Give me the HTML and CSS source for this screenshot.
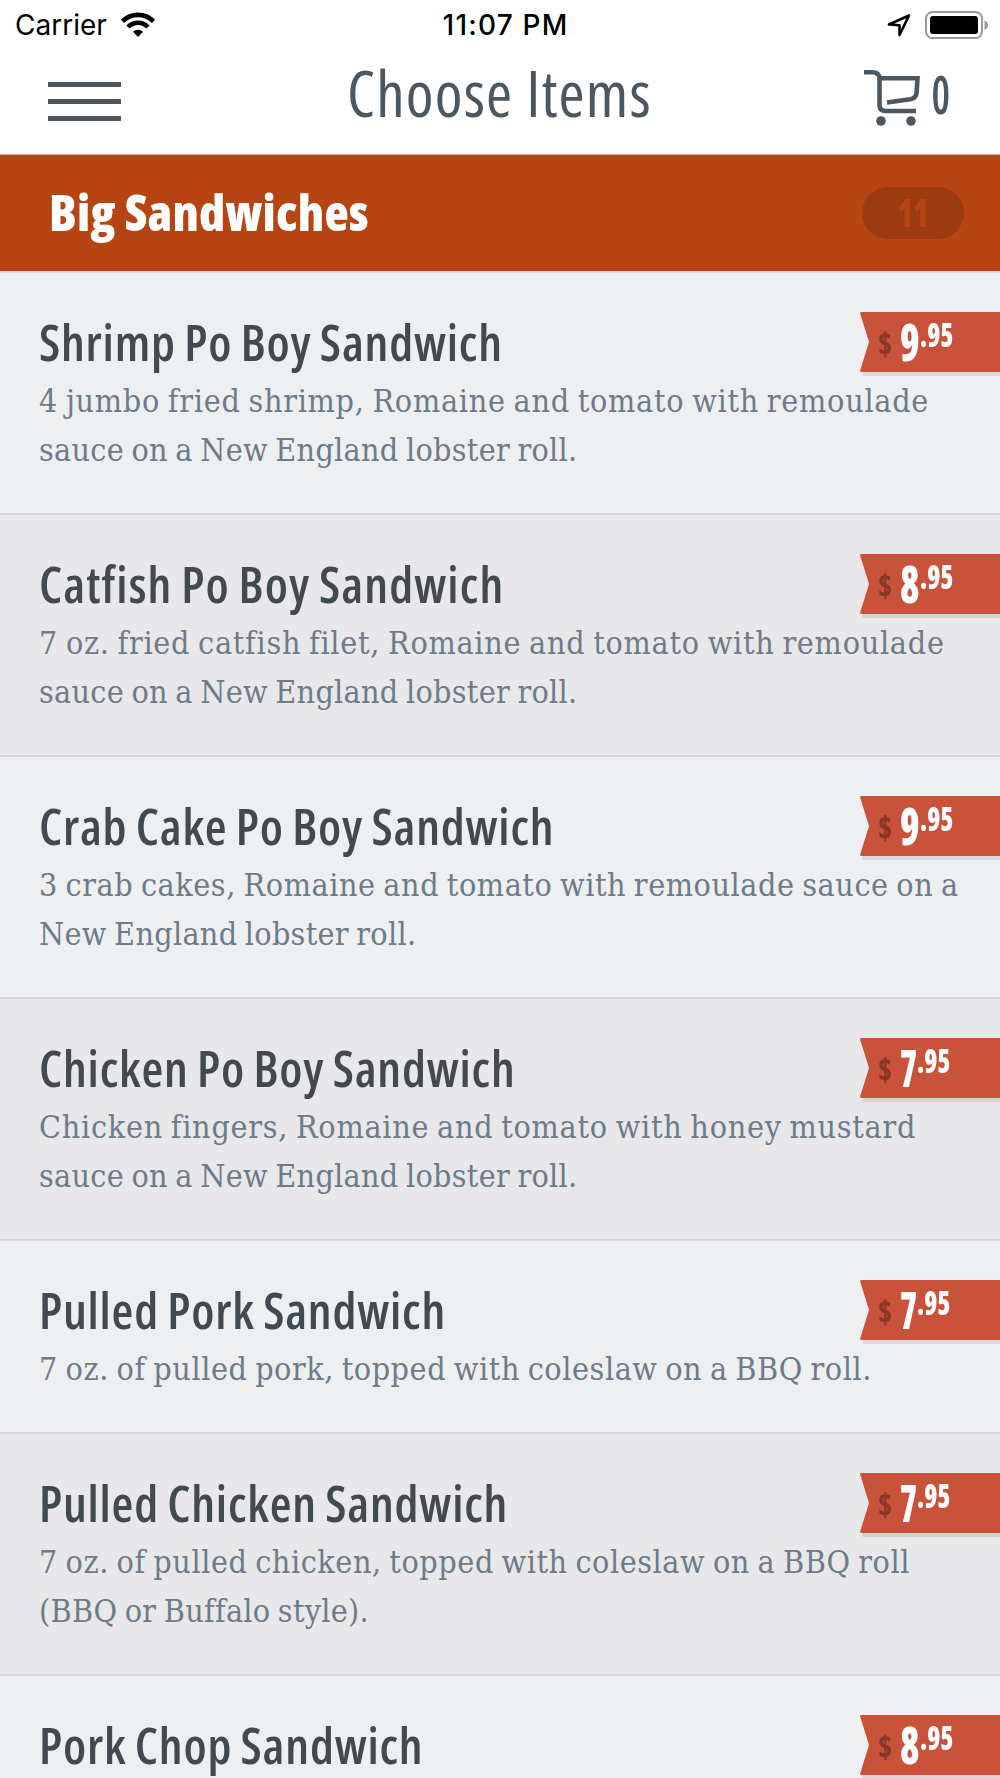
FILE: index.html
```
<!DOCTYPE html>
<html lang="en">
<head>
    <meta charset="UTF-8">
    <meta name="viewport" content="width=device-width, initial-scale=1.0">
    <title>Choose Items</title>
    <link rel="stylesheet" href="styles.css">
</head>
<body>
    <div class="statusbar">
        <span class="carrier">Carrier</span>
        <svg class="wifi" width="34" height="26" viewBox="0 0 34 26">
            <g fill="none" stroke="#000" stroke-width="4.6">
                <path d="M1.5 9.3a22 22 0 0 1 31 0"/>
                <path d="M7 15a14 14 0 0 1 20 0"/>
            </g>
            <path d="M17 25l-5-5.2a7.4 7.4 0 0 1 10 0z"/>
        </svg>
        <span class="time">11:07 PM</span>
        <svg class="location" width="24" height="24" viewBox="0 0 24 24">
            <path d="M2 11.5L22 2.5 12.5 22v-9.8z" fill="none" stroke="#000" stroke-width="2.6" stroke-linejoin="round"/>
        </svg>
        <svg class="battery" width="64" height="28" viewBox="0 0 64 28">
            <rect x="1" y="1" width="56" height="26" rx="6.5" fill="#fff" stroke="#999" stroke-width="2"/>
            <rect x="5" y="5" width="48" height="18" rx="3"/>
            <path d="M59.5 9.5q3.5 1.5 3.5 4.7t-3.5 4.7z" fill="#999"/>
        </svg>
    </div>
    <header class="header">
        <div class="menu"><i></i><i></i><i></i></div>
        <h1>Choose Items</h1>
        <div class="cart">
            <svg width="58" height="58" viewBox="0 0 58 58">
                <g fill="none" stroke="#4d5760" stroke-width="4.6">
                    <path d="M0 4.2h8q7.5 0 7.5 6.5V37q0 6 6 6H52"/>
                    <path d="M15.5 10.3H53.5l-.9 14q-.4 6-6.5 7L23 34.5"/>
                </g>
                <circle cx="17" cy="53" r="4.8" fill="#4d5760"/>
                <circle cx="47" cy="53" r="4.8" fill="#4d5760"/>
            </svg>
            <span class="cart-count">0</span>
        </div>
    </header>
    <div class="category">
        <h2>Big Sandwiches</h2>
        <div class="badge"><span>11</span></div>
    </div>
    <ul class="items">
        <li>
            <h3>Shrimp Po Boy Sandwich</h3>
            <p class="wide">4 jumbo fried shrimp, Romaine and tomato with remoulade<br>sauce on a New England lobster roll.</p>
            <div class="price"><i>$</i><b>9</b><sup>.95</sup></div>
        </li>
        <li>
            <h3 class="wide">Catfish Po Boy Sandwich</h3>
            <p class="wide">7 oz. fried catfish filet, Romaine and tomato with remoulade<br>sauce on a New England lobster roll.</p>
            <div class="price"><i>$</i><b>8</b><sup>.95</sup></div>
        </li>
        <li>
            <h3>Crab Cake Po Boy Sandwich</h3>
            <p>3 crab cakes, Romaine and tomato with remoulade sauce on a<br>New England lobster roll.</p>
            <div class="price"><i>$</i><b>9</b><sup>.95</sup></div>
        </li>
        <li>
            <h3>Chicken Po Boy Sandwich</h3>
            <p class="wide">Chicken fingers, Romaine and tomato with honey mustard<br>sauce on a New England lobster roll.</p>
            <div class="price seven"><i>$</i><b>7</b><sup>.95</sup></div>
        </li>
        <li>
            <h3>Pulled Pork Sandwich</h3>
            <p>7 oz. of pulled pork, topped with coleslaw on a BBQ roll.</p>
            <div class="price seven"><i>$</i><b>7</b><sup>.95</sup></div>
        </li>
        <li>
            <h3>Pulled Chicken Sandwich</h3>
            <p>7 oz. of pulled chicken, topped with coleslaw on a BBQ roll<br>(BBQ or Buffalo style).</p>
            <div class="price seven"><i>$</i><b>7</b><sup>.95</sup></div>
        </li>
        <li>
            <h3>Pork Chop Sandwich</h3>
            <div class="price"><i>$</i><b>8</b><sup>.95</sup></div>
        </li>
    </ul>
</body>
</html>
```
FILE: styles.css
```
* {
    box-sizing: border-box;
}
body {
    margin: 0;
    height: 1778px;
    overflow: hidden;
    background: #fff;
    font-family: "Open Sans", sans-serif;
    font-stretch: 75%;
    white-space: nowrap;
}
h1, h2, h3, p, ul {
    margin: 0;
    padding: 0;
}
.statusbar {
    display: flex;
    align-items: center;
    position: relative;
    height: 50px;
    padding: 0 11px 0 15px;
    font-family: Inter, sans-serif;
    font-size: 28px;
    font-stretch: 100%;
    color: #000;
}
.wifi {
    margin-left: 14px;
}
.time {
    position: absolute;
    left: 0;
    right: 0;
    padding-left: 11px;
    text-align: center;
    font-weight: 550;
    letter-spacing: 1.2px;
}
.location {
    margin-left: auto;
}
.battery {
    margin-left: 14px;
}
.header {
    display: grid;
    grid-template-columns: 1fr auto 1fr;
    align-items: start;
    height: 105px;
    padding: 0 49px 0 48px;
    border-bottom: 1px solid #c9b9ae;
    color: #4d5760;
}
.menu {
    width: 73px;
    padding-top: 32px;
}
.menu i {
    display: block;
    height: 5px;
    margin-bottom: 12px;
    background: #4d5760;
}
h1 {
    font-size: 63px;
    font-weight: 400;
    line-height: 86px;
    letter-spacing: 1.2px;
}
.cart {
    display: flex;
    justify-self: end;
    padding-top: 18px;
}
.cart-count {
    width: 29px;
    padding-left: 12px;
    font-size: 52px;
    font-weight: 650;
    line-height: 52px;
    transform: scaleX(.8);
    transform-origin: left;
}
.category {
    display: flex;
    align-items: center;
    justify-content: space-between;
    height: 116px;
    padding: 0 36px 0 49px;
    background: #b74514;
    color: #fff;
}
h2 {
    padding-bottom: 3px;
    font-size: 50px;
    font-weight: 800;
    letter-spacing: 0.2px;
}
.badge {
    width: 102px;
    height: 52px;
    margin-bottom: 1px;
    border-radius: 26px;
    background: #9c3a12;
    color: #b74514;
    font-size: 39px;
    font-weight: 800;
    line-height: 50px;
    text-align: center;
}
.badge span {
    display: block;
    transform: scaleX(.8);
}
.items {
    border-top: 2px solid #d8d9db;
    list-style: none;
}
.items li {
    position: relative;
    padding: 35px 0 38px 39px;
    border-bottom: 2px solid #d6d6d9;
    background: #eeeff1;
}
.items li:nth-child(even) {
    background: #e8e8ea;
}
h3 {
    height: 69px;
    color: #424a50;
    font-size: 50px;
    font-weight: 620;
    line-height: 69px;
    letter-spacing: 0.8px;
    word-spacing: -1.5px;
}
h3.wide {
    letter-spacing: 1.1px;
}
p {
    color: #6e7b88;
    font-family: "DejaVu Serif Condensed", "DejaVu Serif", serif;
    font-size: 32px;
    font-stretch: 75%;
    letter-spacing: 0.28px;
    line-height: 49px;
    word-spacing: -2px;
}
p::first-line {
    letter-spacing: 0.55px;
}
p.wide::first-line {
    letter-spacing: 0.72px;
}
.price {
    position: absolute;
    top: 39px;
    right: 0;
    display: flex;
    isolation: isolate;
    width: 140px;
    height: 60px;
    padding-left: 18px;
    color: #fff;
    filter: drop-shadow(2px 4px 0 rgba(0, 0, 0, .09));
}
.price::before {
    content: "";
    position: absolute;
    inset: 0;
    z-index: -1;
    background: #c9523b;
    clip-path: polygon(0 1px, 1px 0, 100% 0, 100% 100%, 1px 100%, 0 59px, 9px 50%);
}
.price i, .price b, .price sup {
    transform-origin: left;
}
.price i {
    width: 22px;
    color: #8a3728;
    font-size: 32px;
    font-style: normal;
    font-weight: 800;
    line-height: 62px;
    transform: scaleX(.9);
}
.price b {
    width: 20px;
    font-size: 52px;
    font-weight: 800;
    line-height: 58px;
    transform: scaleX(.76);
}
.price sup {
    font-size: 33px;
    font-weight: 800;
    line-height: 46px;
    transform: scaleX(.8);
}
.price.seven b {
    width: 17px;
    transform: scaleX(.66);
}
```
